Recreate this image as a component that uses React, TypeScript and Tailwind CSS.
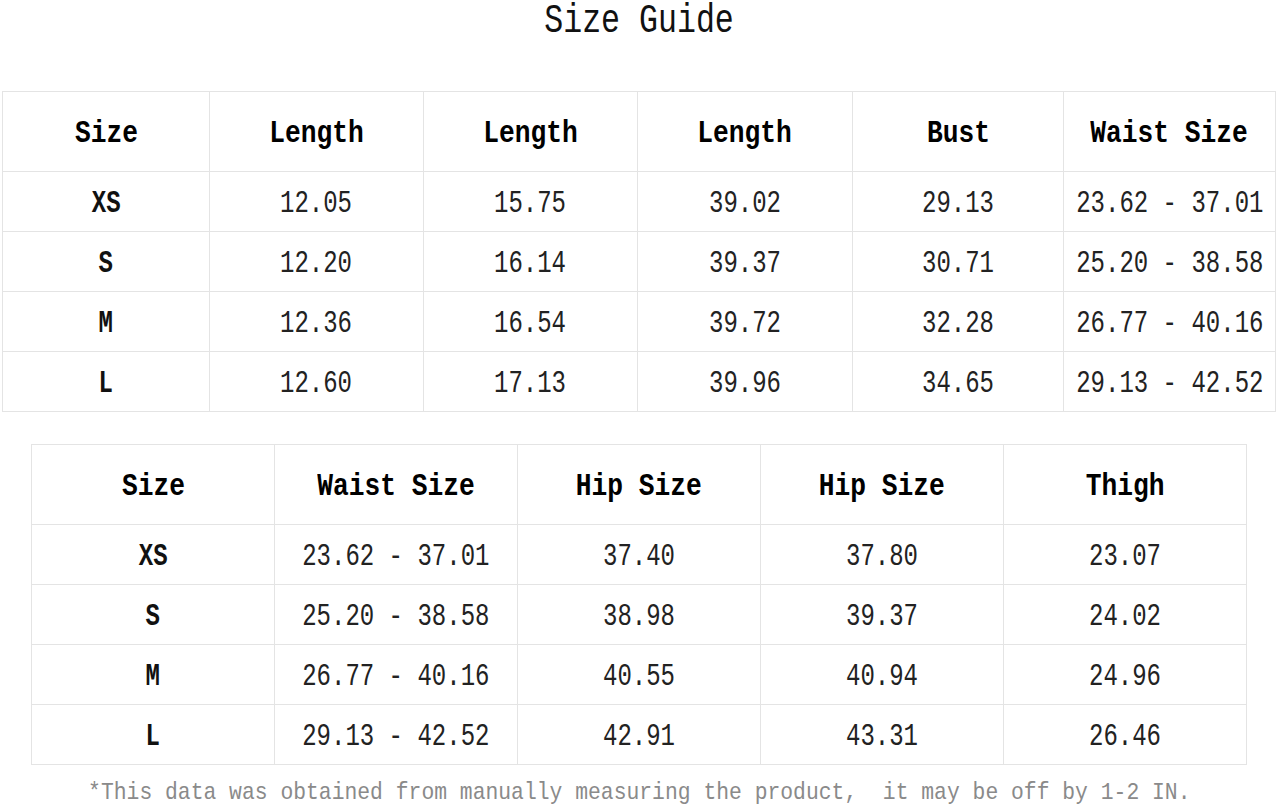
import React from "react";

const font = "font-['Liberation_Mono','Noto_Sans_CJK_SC',monospace]";

const topHead = ["Size", "Length", "Length", "Length", "Bust", "Waist Size"];
const topRows = [
  ["XS", "12.05", "15.75", "39.02", "29.13", "23.62 - 37.01"],
  ["S", "12.20", "16.14", "39.37", "30.71", "25.20 - 38.58"],
  ["M", "12.36", "16.54", "39.72", "32.28", "26.77 - 40.16"],
  ["L", "12.60", "17.13", "39.96", "34.65", "29.13 - 42.52"],
];

const bottomHead = ["Size", "Waist Size", "Hip Size", "Hip Size", "Thigh"];
const bottomRows = [
  ["XS", "23.62 - 37.01", "37.40", "37.80", "23.07"],
  ["S", "25.20 - 38.58", "38.98", "39.37", "24.02"],
  ["M", "26.77 - 40.16", "40.55", "40.94", "24.96"],
  ["L", "29.13 - 42.52", "42.91", "43.31", "26.46"],
];

function Cell({
  text,
  head,
  label,
}: {
  text: string;
  head?: boolean;
  label?: boolean;
}) {
  return (
    <div
      className={`flex items-center justify-center pt-[4px] border-r border-b border-[#e4e4e4] ${
        head ? "h-[80px]" : "h-[60px]"
      }`}
    >
      <span
        className={`inline-block whitespace-pre text-[32px] leading-none ${
          head
            ? "font-bold text-black scale-x-[0.82]"
            : label
            ? "font-bold text-[#111] scale-x-[0.75]"
            : "text-[#222] scale-x-[0.75]"
        }`}
      >
        {text}
      </span>
    </div>
  );
}

function SizeTable({
  head,
  rows,
  cols,
  className,
}: {
  head: string[];
  rows: string[][];
  cols: string;
  className: string;
}) {
  return (
    <div className={`grid border-t border-l border-[#e4e4e4] ${cols} ${className}`}>
      {head.map((h, i) => (
        <Cell key={"h" + i} text={h} head />
      ))}
      {rows.map((row, r) =>
        row.map((c, i) => <Cell key={r + "-" + i} text={c} label={i === 0} />)
      )}
    </div>
  );
}

export default function App() {
  return (
    <div className={`w-[1278px] h-[805px] bg-white overflow-hidden ${font}`}>
      {/* title */}
      <div className="h-[44px] flex justify-center">
        <span className="inline-block text-[40px] leading-[44px] text-[#111] scale-x-[0.79]">
          Size Guide
        </span>
      </div>

      <SizeTable
        head={topHead}
        rows={topRows}
        cols="grid-cols-[207px_214px_214px_215px_211px_212px]"
        className="mt-[47px] ml-[2px] w-[1274px]"
      />

      <SizeTable
        head={bottomHead}
        rows={bottomRows}
        cols="grid-cols-[243px_243px_243px_243px_243px]"
        className="mt-[32px] ml-[31px] w-[1216px]"
      />

      <div className="mt-[11px] flex justify-center">
        <span className="inline-block whitespace-pre text-[24px] leading-[34px] text-[#8a8a8a] scale-x-[0.89]">
          *This data was obtained from manually measuring the product,  it may be off by 1-2 IN.
        </span>
      </div>
    </div>
  );
}
